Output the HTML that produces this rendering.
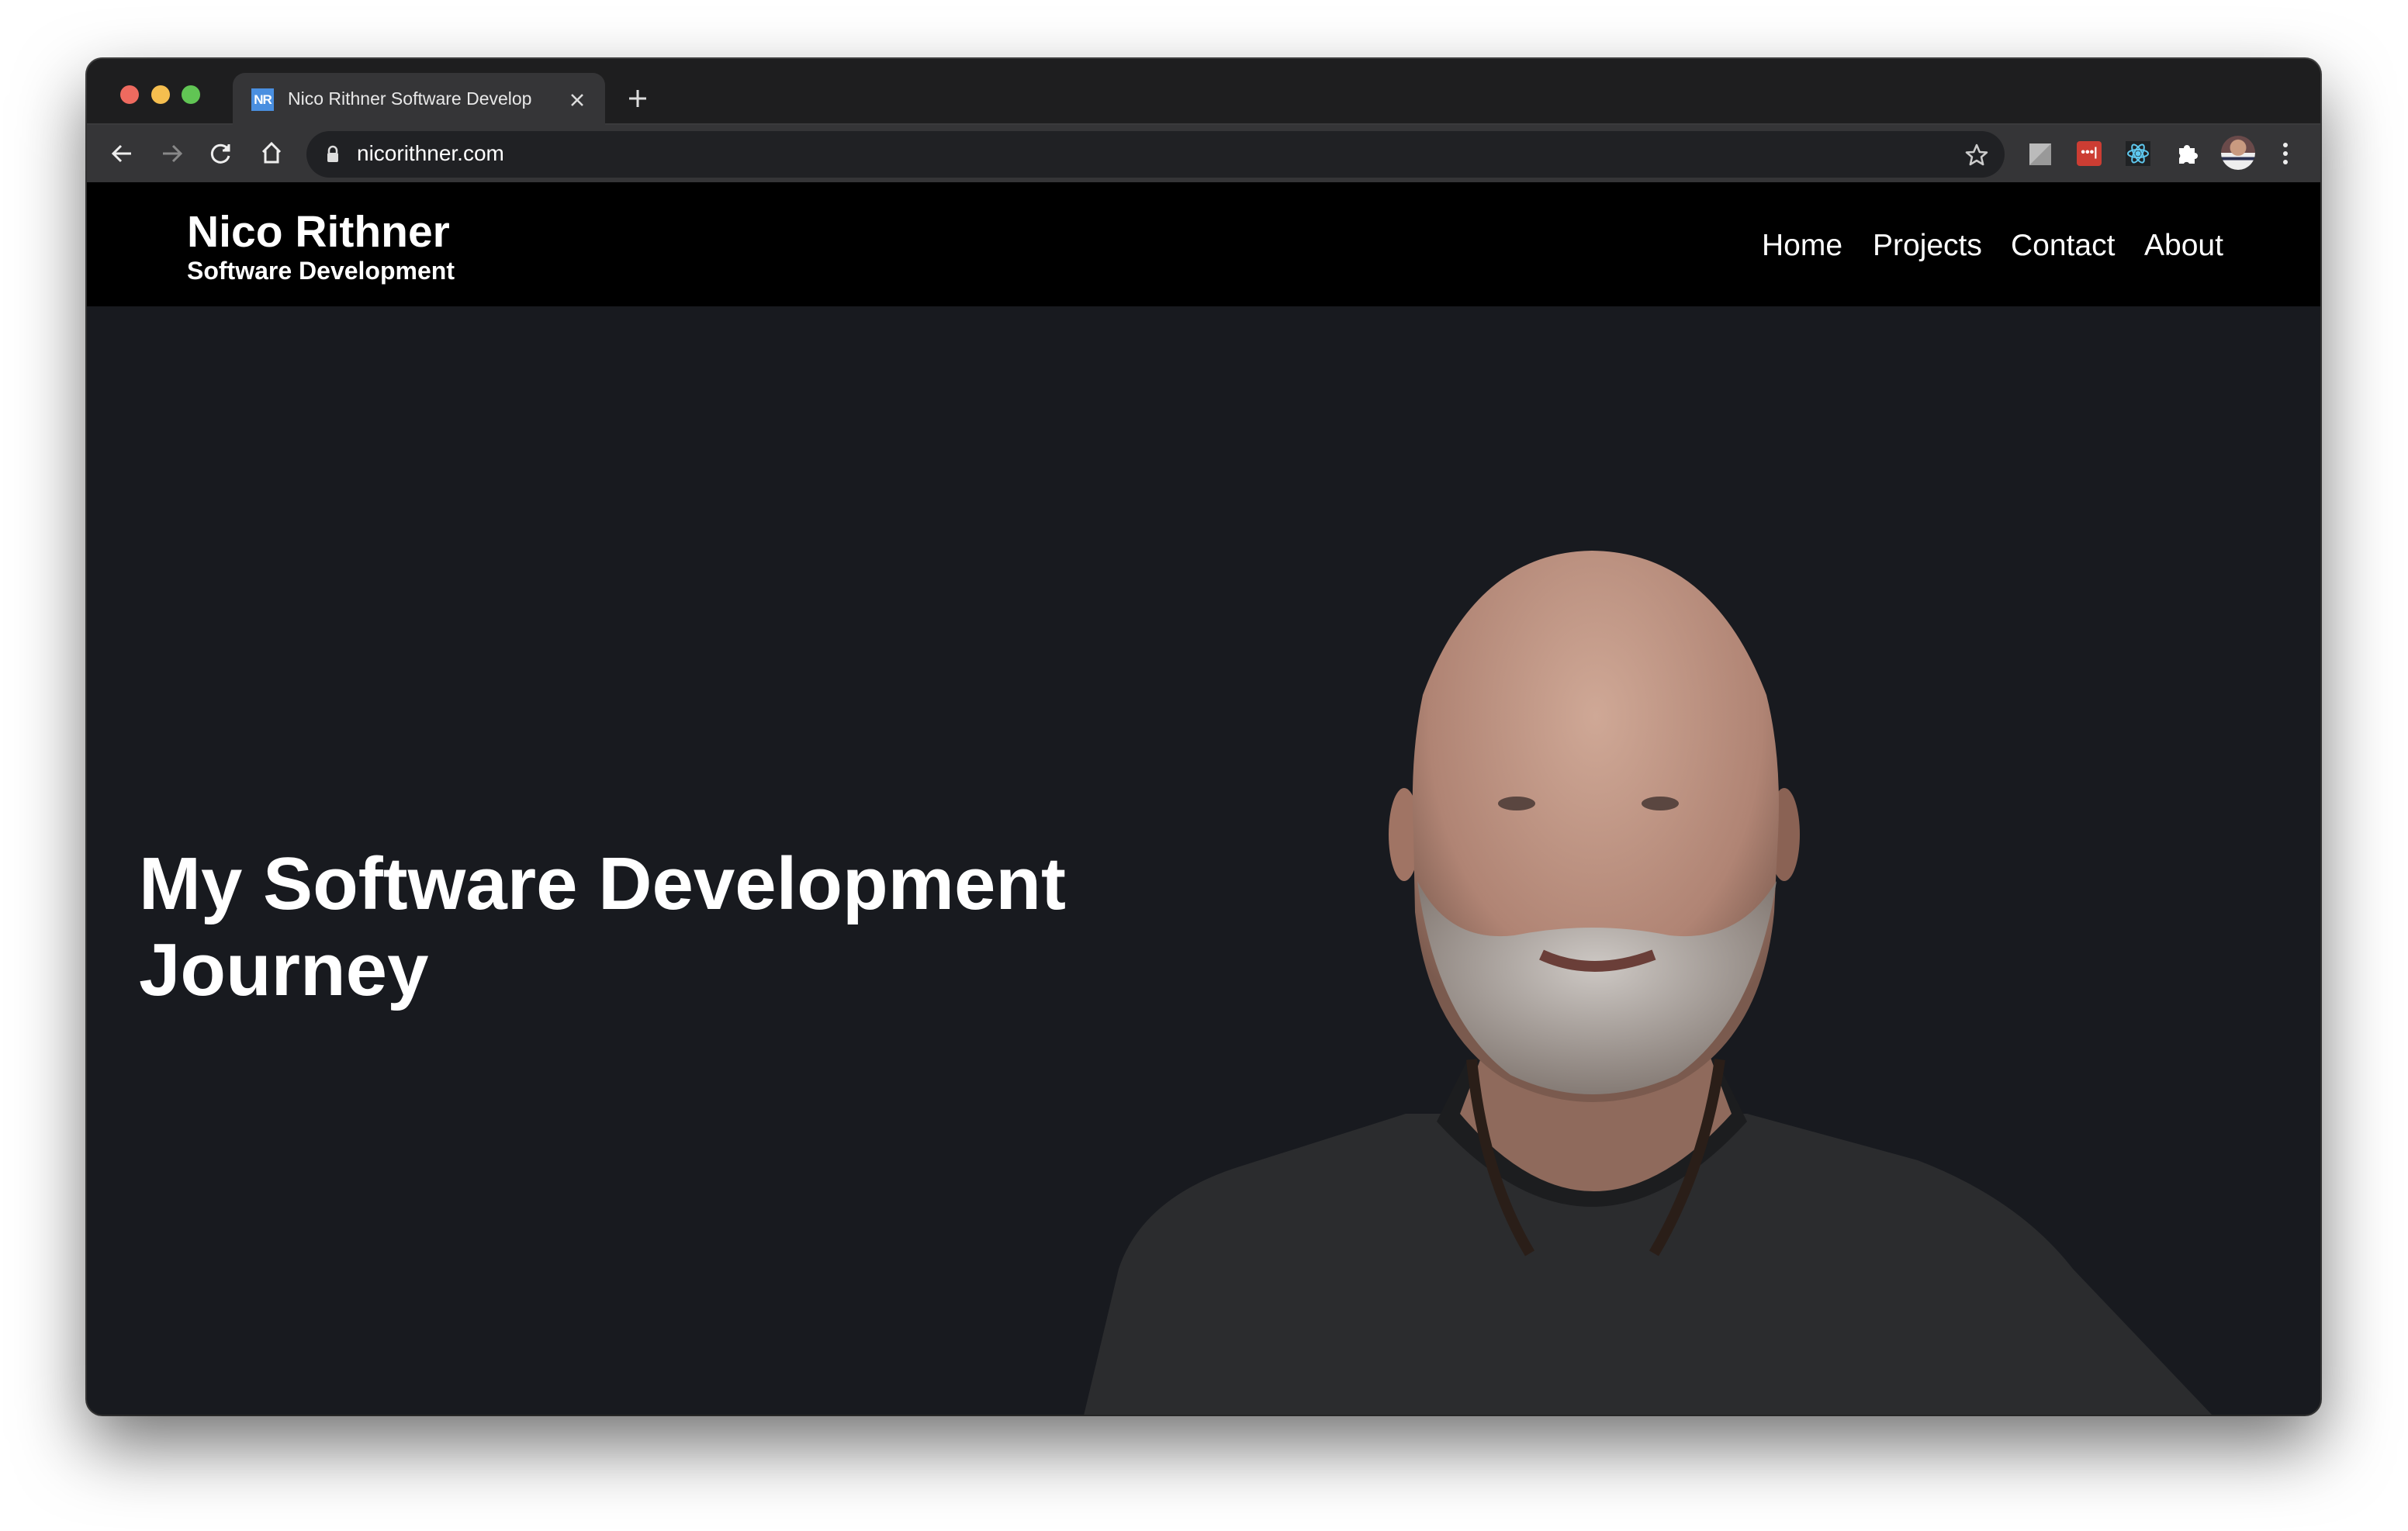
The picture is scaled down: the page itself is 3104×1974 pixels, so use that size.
<!DOCTYPE html>
<html><head><meta charset="utf-8"><style>
*{margin:0;padding:0;box-sizing:border-box}
body{width:3104px;height:1974px;background:#fff;position:relative;overflow:hidden;font-family:"Liberation Sans",Arial,sans-serif}
.win{position:absolute;left:112px;top:76px;width:2879px;height:1748px;border-radius:20px;overflow:hidden;background:#181a1f;box-shadow:0 40px 90px rgba(0,0,0,.55),0 0 0 2px #444}
.tabbar{position:absolute;left:0;top:0;width:100%;height:85px;background:#1e1e1f;border-bottom:2px solid #3a3a3c}
.dot{position:absolute;top:34px;width:24px;height:24px;border-radius:50%}
.tab{position:absolute;left:188px;top:18px;width:480px;height:69px;background:#353537;border-radius:16px 16px 0 0}
.fav{position:absolute;left:24px;top:20px;width:29px;height:29px;background:#4a8fe0;color:#fff;font-size:17px;font-weight:bold;line-height:29px;text-align:center;letter-spacing:-1px}
.tt{position:absolute;left:71px;top:20px;color:#e8e8e8;font-size:23px;white-space:nowrap;width:340px;overflow:hidden}
.toolbar{position:absolute;left:0;top:85px;width:100%;height:74px;background:#353537}
.omni{position:absolute;left:283px;top:8px;width:2189px;height:60px;background:#202124;border-radius:30px}
.url{position:absolute;left:65px;top:13px;color:#fff;font-size:28px}
.hdr{position:absolute;left:0;top:159px;width:100%;height:160px;background:#000}
.nav{position:absolute;top:60px;color:#fff;font-size:39px}
h1{position:absolute;left:67px;top:1008px;color:#fff;font-size:96px;font-weight:bold;line-height:111px}
</style></head><body>
<div class="win">
 <div class="tabbar">
  <div class="dot" style="left:43px;background:#ee6a5f"></div>
  <div class="dot" style="left:83px;background:#f5be4f"></div>
  <div class="dot" style="left:122px;background:#61c554"></div>
  <div class="tab"><div class="fav">NR</div><div class="tt">Nico Rithner Software Develop</div>
   <svg style="position:absolute;left:435px;top:26px" width="18" height="18"><path d="M2 2L16 16M16 2L2 16" stroke="#ddd" stroke-width="2.5"/></svg></div>
  <svg style="position:absolute;left:697px;top:38px" width="26" height="26"><path d="M13 2V24M2 13H24" stroke="#ddd" stroke-width="3"/></svg>
 </div>
 <div class="toolbar">
  <svg style="position:absolute;left:30px;top:22px" width="30" height="30" fill="none" stroke="#eee" stroke-width="3"><path d="M27 15H4M14 5L4 15L14 25"/></svg>
  <svg style="position:absolute;left:95px;top:22px" width="30" height="30" fill="none" stroke="#888" stroke-width="3"><path d="M3 15H26M16 5L26 15L16 25"/></svg>
  <svg style="position:absolute;left:158px;top:22px" width="30" height="30" fill="none" stroke="#eee" stroke-width="3"><path d="M24 10A11 11 0 1 0 25 18"/><path d="M25 3V11H17" fill="#eee"/></svg>
  <svg style="position:absolute;left:223px;top:21px" width="30" height="30" fill="none" stroke="#eee" stroke-width="3"><path d="M4 14L15 3L26 14M7 12V27H23V12"/></svg>
  <div class="omni">
   <svg style="position:absolute;left:25px;top:18px" width="18" height="24"><path d="M4 10V7A5 5 0 0 1 14 7V10" fill="none" stroke="#ddd" stroke-width="2.5"/><rect x="2" y="10" width="14" height="12" rx="2" fill="#ddd"/></svg>
   <div class="url">nicorithner.com</div>
   <svg style="position:absolute;left:2138px;top:16px" width="30" height="30"><path d="M15 2L18.8 11L28 11.5L21 17.5L23.2 27L15 22L6.8 27L9 17.5L2 11.5L11.2 11Z" fill="none" stroke="#ccc" stroke-width="2.5" stroke-linejoin="round"/></svg>
  </div>
  <svg style="position:absolute;left:2504px;top:24px" width="28" height="28"><rect width="28" height="28" fill="#bbb"/><path d="M28 0V28H0Z" fill="#999"/></svg>
  <div style="position:absolute;left:2565px;top:21px;width:32px;height:32px;background:#cc3d33;border-radius:4px;color:#fff;font-size:16px;line-height:30px;text-align:center;font-weight:bold">•••|</div>
  <svg style="position:absolute;left:2628px;top:21px" width="32" height="32" fill="none" stroke="#5ec8ef" stroke-width="2"><rect width="32" height="32" fill="#202224" stroke="none"/><ellipse cx="16" cy="16" rx="13" ry="5"/><ellipse cx="16" cy="16" rx="13" ry="5" transform="rotate(60 16 16)"/><ellipse cx="16" cy="16" rx="13" ry="5" transform="rotate(-60 16 16)"/><circle cx="16" cy="16" r="2.5" fill="#5ec8ef"/></svg>
  <svg style="position:absolute;left:2694px;top:22px" width="30" height="30" fill="#fff"><path d="M3 8H9A4 4 0 0 1 17 8H23V14A4 4 0 0 1 23 22V28H16A4 4 0 0 0 9 28H3V21A4 4 0 0 0 3 15Z"/></svg>
  <div style="position:absolute;left:2751px;top:14px;width:44px;height:44px;border-radius:50%;background:radial-gradient(circle at 50% 35%,#c99a80 0 28%,transparent 30%),linear-gradient(#6a4a4a 0 50%,#eee 50% 62%,#2a3050 62% 72%,#eee 72%);"></div>
  <svg style="position:absolute;left:2830px;top:22px" width="8" height="30" fill="#eee"><circle cx="4" cy="4" r="3"/><circle cx="4" cy="15" r="3"/><circle cx="4" cy="26" r="3"/></svg>
 </div>
 <div class="hdr">
  <div style="position:absolute;left:129px;top:32px;color:#fff;font-size:57px;font-weight:bold;line-height:64px">Nico Rithner</div>
  <div style="position:absolute;left:129px;top:96px;color:#fff;font-size:32px;font-weight:bold;line-height:36px">Software Development</div>
  <div class="nav" style="left:2159px">Home</div>
  <div class="nav" style="left:2302px">Projects</div>
  <div class="nav" style="left:2480px">Contact</div>
  <div class="nav" style="left:2652px">About</div>
 </div>
 <svg style="position:absolute;left:0;top:0" width="2880" height="1749">
  <defs>
   <radialGradient id="sk" cx="50%" cy="30%" r="65%"><stop offset="0" stop-color="#cfa896"/><stop offset=".7" stop-color="#b08474"/><stop offset="1" stop-color="#7a5a4e"/></radialGradient>
   <radialGradient id="bd" cx="50%" cy="40%" r="60%"><stop offset="0" stop-color="#cdc8c4"/><stop offset="1" stop-color="#857b75"/></radialGradient>
  </defs>
  <path d="M1285 1749L1330 1560Q1360 1470 1480 1430L1700 1360L2140 1360L2360 1420Q2490 1470 2560 1560L2740 1749Z" fill="#2b2c2e"/>
  <path d="M1740 1370Q1940 1590 2140 1370L2100 1290L1780 1290Z" fill="#1c1d1f"/>
  <path d="M1770 1360Q1940 1560 2120 1360L2090 1280L1800 1280Z" fill="#8f6a5c"/>
  <path d="M1785 1290Q1800 1440 1860 1540M2105 1290Q2085 1430 2020 1540" stroke="#2a1e18" stroke-width="14" fill="none"/>
  <ellipse cx="1698" cy="1000" rx="20" ry="60" fill="#a07464"/>
  <ellipse cx="2188" cy="1000" rx="20" ry="60" fill="#8a6254"/>
  <path d="M1940 634Q1790 636 1722 820Q1705 900 1710 1000L1712 1100Q1730 1260 1835 1320Q1940 1370 2050 1320Q2160 1260 2175 1100L2180 1000Q2185 900 2165 820Q2095 636 1940 634Z" fill="url(#sk)"/>
  <path d="M1715 1060Q1740 1240 1835 1310Q1940 1360 2050 1310Q2150 1240 2178 1060Q2130 1140 2040 1130Q1940 1110 1840 1130Q1755 1140 1715 1060Z" fill="url(#bd)"/>
  <path d="M1875 1155Q1940 1185 2020 1155" stroke="#6a3e38" stroke-width="14" fill="none"/>
  <ellipse cx="1843" cy="960" rx="24" ry="9" fill="#5a4640"/>
  <ellipse cx="2028" cy="960" rx="24" ry="9" fill="#5a4640"/>
 </svg>
 <h1>My Software Development<br>Journey</h1>
</div>
</body></html>
